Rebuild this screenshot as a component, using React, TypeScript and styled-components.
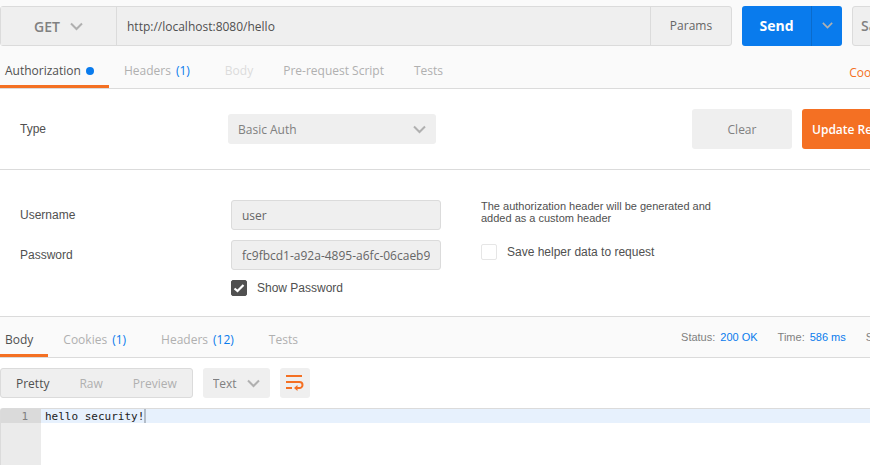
import React, { useState } from "react";
import styled, { createGlobalStyle } from "styled-components";

const color = {
  orange: "#f47023",
  blue: "#097bed",
  line: "#dbdbdb",
  fill: "#efefef",
  bar: "#fafafa",
  text: "#505050",
  muted: "#808080",
  faint: "#b0b0b0",
};
const sans = '"Open Sans", sans-serif';
const plain = '"Liberation Sans", Arial, sans-serif';

const GlobalStyle = createGlobalStyle`
  *, *::before, *::after { box-sizing: border-box; }
  html, body { margin: 0; }
  body { background: #fff; color: ${color.text}; font: 12px/18px ${sans}; overflow: hidden; }
  button, input, select { font: inherit; color: inherit; margin: 0; }
  button { cursor: pointer; }
`;

const Page = styled.main`
  display: flex;
  flex-direction: column;
  min-height: 100vh;
  overflow: hidden;
`;

const RequestHeader = styled.header`
  background: ${color.bar};
  padding-top: 6px;
  border-bottom: 1px solid ${color.line};
`;

const RequestLine = styled.form`
  display: flex;
  gap: 10px;
  height: 40px;
  margin-right: -62px;
`;

const UrlGroup = styled.div`
  display: flex;
  flex: 1;
  min-width: 0;
  border: 1px solid ${color.line};
  border-radius: 3px;
  background: ${color.fill};
`;

const SelectBox = styled.div<{ $width: number; $pad: number }>`
  display: grid;
  grid-template-columns: 1fr auto;
  align-items: center;
  flex: none;
  width: ${(p) => p.$width}px;
  padding-right: ${(p) => p.$pad}px;
  border-radius: 3px;
  background: ${color.fill};
  color: ${color.muted};

  select {
    grid-area: 1 / 1 / 2 / 3;
    width: 100%;
    height: 100%;
    appearance: none;
    border: 0;
    background: transparent;
    padding: 1px 0 0 10px;
    outline: none;
  }
  svg {
    grid-area: 1 / 2;
    pointer-events: none;
  }
`;

const MethodBox = styled(SelectBox)`
  border-right: 1px solid ${color.line};
  border-radius: 0;
  font-size: 14px;
  font-weight: 600;

  select { padding-left: 33px; }
`;

const TypeBox = styled(SelectBox)`
  height: 30px;
`;

const UrlInput = styled.input`
  flex: 1;
  min-width: 0;
  border: 0;
  background: transparent;
  padding: 1px 10px 0;
  outline: none;
`;

const ParamsButton = styled.button`
  width: 81px;
  border: 0;
  border-left: 1px solid ${color.line};
  background: transparent;
  color: #666;
`;

const SendGroup = styled.div`
  display: flex;
  width: 100px;
  border-radius: 3px;
  overflow: hidden;
  background: ${color.blue};
  color: #fff;
`;

const SendButton = styled.button`
  flex: 1;
  border: 0;
  background: transparent;
  font-size: 14px;
  font-weight: 700;
`;

const SendMenuButton = styled.button`
  display: grid;
  place-items: center;
  width: 31px;
  padding: 0 0 2px;
  border: 0;
  border-left: 1px solid #0a6bcc;
  background: transparent;
`;

const SaveButton = styled.button`
  width: 80px;
  padding: 0 8px;
  border: 1px solid ${color.line};
  border-radius: 3px;
  background: ${color.fill};
  color: ${color.muted};
  font-size: 14px;
  font-weight: 600;
  text-align: left;
`;

const TabBar = styled.div`
  display: flex;
  justify-content: space-between;
`;

const Tabs = styled.nav`
  display: flex;
  margin-left: -10px;
`;

const Tab = styled.button<{ $active?: boolean; $height: number }>`
  display: flex;
  align-items: center;
  gap: 5px;
  height: ${(p) => p.$height}px;
  padding: ${(p) => (p.$height > 40 ? 11 : 8)}px 15px 0;
  border: 0;
  border-bottom: 3px solid ${(p) => (p.$active ? color.orange : "transparent")};
  background: transparent;
  color: ${(p) => (p.$active ? color.text : color.faint)};
  white-space: nowrap;

  &:disabled { color: #dcdcdc; }
`;

const Count = styled.span`
  margin-right: 5px;
  color: ${color.blue};
`;

const Dot = styled.span`
  width: 8px;
  height: 8px;
  border-radius: 50%;
  background: ${color.blue};
`;

const CookiesLink = styled.a`
  align-self: center;
  margin-right: -23px;
  padding-top: 11px;
  color: ${color.orange};
  text-decoration: none;
`;

const AuthRow = styled.section`
  display: flex;
  align-items: center;
  height: 81px;
  padding-left: 20px;
  margin-right: -60px;
  border-bottom: 1px solid ${color.line};
`;

const TypeLabel = styled.label`
  width: 208px;
  font-family: ${plain};
`;

const Actions = styled.div`
  display: flex;
  gap: 10px;
  margin-left: auto;
`;

const ActionButton = styled.button<{ $primary?: boolean }>`
  width: ${(p) => (p.$primary ? 128 : 100)}px;
  height: 40px;
  padding: 1px 10px 0;
  border: 0;
  border-radius: 3px;
  background: ${(p) => (p.$primary ? color.orange : color.fill)};
  color: ${(p) => (p.$primary ? "#fff" : color.muted)};
  font-weight: ${(p) => (p.$primary ? 600 : 400)};
  text-align: ${(p) => (p.$primary ? "left" : "center")};
  white-space: nowrap;
`;

const Credentials = styled.section`
  display: grid;
  grid-template-columns: 421px 1fr;
  column-gap: 40px;
  padding: 30px 20px 20px;
  font-family: ${plain};
`;

const Fields = styled.div`
  display: grid;
  grid-template-columns: 211px 210px;
  row-gap: 10px;
  align-items: center;
`;

const TextInput = styled.input`
  width: 100%;
  height: 30px;
  padding: 1px 10px 0;
  border: 1px solid ${color.line};
  border-radius: 3px;
  background: ${color.fill};
  color: #666;
  font-family: ${sans};
  outline: none;
`;

const CheckLabel = styled.label`
  display: flex;
  align-items: center;
  gap: 10px;
  height: 16px;
`;

const ShowPassword = styled(CheckLabel)`
  grid-column: 2;
`;

const Check = styled.input`
  appearance: none;
  flex: none;
  width: 16px;
  height: 16px;
  border: 1px solid #e6e6e6;
  border-radius: 2px;
  background: #fff;

  &:checked {
    border-color: ${color.text};
    background: ${color.text} url("data:image/svg+xml,%3Csvg xmlns='http://www.w3.org/2000/svg' viewBox='0 0 14 14'%3E%3Cpath d='M2.5 7.5 5.5 10 11.5 4' fill='none' stroke='white' stroke-width='2.2'/%3E%3C/svg%3E");
  }
`;

const Helper = styled.div`
  display: flex;
  flex-direction: column;
  gap: 20px;
`;

const HelperText = styled.p`
  max-width: 240px;
  margin: 0;
  font-size: 11px;
  line-height: 12px;
`;

const ResponseHeader = styled.header`
  height: 42px;
  border-top: 1px solid ${color.line};
  border-bottom: 1px solid ${color.line};
  background: ${color.bar};
`;

const Stats = styled.dl`
  display: flex;
  gap: 20px;
  align-items: center;
  margin: 0 -54px 0 0;
  font: 11px/14px ${plain};
  color: ${color.muted};
  white-space: nowrap;

  div { display: flex; gap: 5px; }
  dd { margin: 0; color: ${color.blue}; }
`;

const Toolbar = styled.div`
  display: flex;
  gap: 10px;
  height: 30px;
  margin: 10px 0;
`;

const ViewModes = styled.div`
  display: flex;
  border: 1px solid ${color.line};
  border-radius: 3px;
  background: ${color.fill};
`;

const ViewMode = styled.button<{ $active?: boolean }>`
  padding: 1px 15px 0;
  border: 0;
  background: transparent;
  color: ${(p) => (p.$active ? color.text : color.faint)};
`;

const WrapButton = styled.button`
  display: grid;
  place-items: center;
  width: 30px;
  padding: 0;
  border: 0;
  border-radius: 3px;
  background: ${color.fill};
`;

const Editor = styled.div`
  display: grid;
  grid-template-columns: 40px 1fr;
  grid-template-rows: 14px 1fr;
  flex: 1;
  border-top: 1px solid ${color.line};
  border-left: 1px solid ${color.line};
  border-top-left-radius: 3px;
  font: 11px/16px "DejaVu Sans Mono", monospace;
`;

const LineNumber = styled.span`
  padding-right: 13px;
  background: #dadada;
  color: ${color.muted};
  text-align: right;
`;

const CodeLine = styled.code`
  display: flex;
  padding-left: 4px;
  background: #e7f1fd;
  color: #222;
  font: inherit;
`;

const Caret = styled.span`
  width: 2px;
  background: #b3bdc9;
`;

const Gutter = styled.div`
  background: #ebebeb;
`;

function Chevron({ size = 13, stroke = color.faint }: { size?: number; stroke?: string }) {
  return (
    <svg width={size} height={size} viewBox="0 0 13 13" fill="none" stroke={stroke} strokeWidth="2" aria-hidden>
      <path d="M1 3.5 6.5 9 12 3.5" />
    </svg>
  );
}

function WrapIcon() {
  return (
    <svg width="18" height="18" viewBox="0 0 18 18" fill="none" stroke={color.orange} strokeWidth="2" aria-hidden>
      <path d="M0 2H16M0 8H13.5A3 3 0 0 1 13.5 14H11M0 14H6" />
      <path d="M11.5 11V17L8 14Z" fill={color.orange} stroke="none" />
    </svg>
  );
}

export default function App() {
  const [url, setUrl] = useState("http://localhost:8080/hello");
  const [user, setUser] = useState("user");
  const [password, setPassword] = useState("fc9fbcd1-a92a-4895-a6fc-06caeb9");
  const [show, setShow] = useState(true);

  return (
    <Page>
      <GlobalStyle />
      <RequestHeader>
        <RequestLine onSubmit={(e) => e.preventDefault()}>
          <UrlGroup>
            <MethodBox $width={116} $pad={33}>
              <select aria-label="Method">
                <option>GET</option>
                <option>POST</option>
              </select>
              <Chevron />
            </MethodBox>
            <UrlInput aria-label="Request URL" value={url} onChange={(e) => setUrl(e.target.value)} />
            <ParamsButton type="button">Params</ParamsButton>
          </UrlGroup>
          <SendGroup>
            <SendButton type="submit">Send</SendButton>
            <SendMenuButton type="button" aria-label="Send options">
              <Chevron size={11} />
            </SendMenuButton>
          </SendGroup>
          <SaveButton type="button">Save</SaveButton>
        </RequestLine>
        <TabBar>
          <Tabs aria-label="Request">
            <Tab $active $height={42}>Authorization<Dot /></Tab>
            <Tab $height={42}>Headers<Count>(1)</Count></Tab>
            <Tab $height={42} disabled>Body</Tab>
            <Tab $height={42}>Pre-request Script</Tab>
            <Tab $height={42}>Tests</Tab>
          </Tabs>
          <CookiesLink href="#cookies">Cookies</CookiesLink>
        </TabBar>
      </RequestHeader>

      <AuthRow>
        <TypeLabel htmlFor="type">Type</TypeLabel>
        <TypeBox $width={208} $pad={10}>
          <select id="type">
            <option>Basic Auth</option>
            <option>No Auth</option>
          </select>
          <Chevron />
        </TypeBox>
        <Actions>
          <ActionButton>Clear</ActionButton>
          <ActionButton $primary>Update Request</ActionButton>
        </Actions>
      </AuthRow>

      <Credentials>
        <Fields>
          <label htmlFor="username">Username</label>
          <TextInput id="username" value={user} onChange={(e) => setUser(e.target.value)} />
          <label htmlFor="password">Password</label>
          <TextInput
            id="password"
            type={show ? "text" : "password"}
            value={password}
            onChange={(e) => setPassword(e.target.value)}
          />
          <ShowPassword>
            <Check type="checkbox" checked={show} onChange={(e) => setShow(e.target.checked)} />
            Show Password
          </ShowPassword>
        </Fields>
        <Helper>
          <HelperText>The authorization header will be generated and added as a custom header</HelperText>
          <CheckLabel>
            <Check type="checkbox" />
            Save helper data to request
          </CheckLabel>
        </Helper>
      </Credentials>

      <ResponseHeader>
        <TabBar>
          <Tabs aria-label="Response">
            <Tab $active $height={40}>Body</Tab>
            <Tab $height={40}>Cookies<Count>(1)</Count></Tab>
            <Tab $height={40}>Headers<Count>(12)</Count></Tab>
            <Tab $height={40}>Tests</Tab>
          </Tabs>
          <Stats>
            <div><dt>Status:</dt><dd>200 OK</dd></div>
            <div><dt>Time:</dt><dd>586 ms</dd></div>
            <div><dt>Size:</dt><dd>258 B</dd></div>
          </Stats>
        </TabBar>
      </ResponseHeader>

      <Toolbar>
        <ViewModes>
          <ViewMode $active>Pretty</ViewMode>
          <ViewMode>Raw</ViewMode>
          <ViewMode>Preview</ViewMode>
        </ViewModes>
        <SelectBox $width={67} $pad={10}>
          <select aria-label="Format">
            <option>Text</option>
            <option>JSON</option>
          </select>
          <Chevron />
        </SelectBox>
        <WrapButton aria-label="Wrap lines">
          <WrapIcon />
        </WrapButton>
      </Toolbar>

      <Editor>
        <LineNumber>1</LineNumber>
        <CodeLine>hello security!<Caret /></CodeLine>
        <Gutter />
      </Editor>
    </Page>
  );
}
